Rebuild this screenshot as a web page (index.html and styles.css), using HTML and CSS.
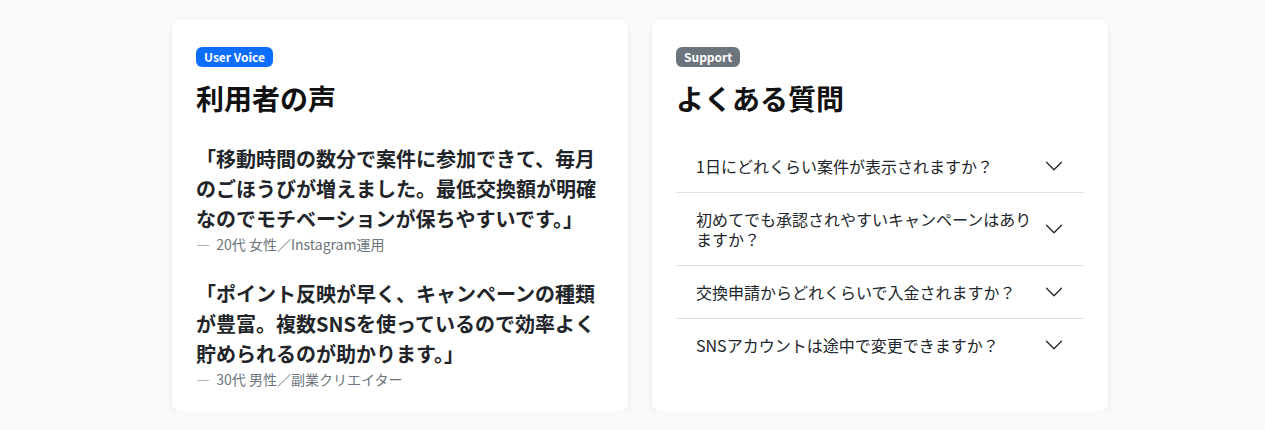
FILE: index.html
```html
<!DOCTYPE html>
<html lang="ja">
<head>
  <meta charset="utf-8">
  <title>利用者の声 / よくある質問</title>
  <link rel="stylesheet" href="styles.css">
</head>
<body>
  <section class="wrap">
    <div class="grid">

      <div class="card">
        <span class="badge badge-primary">User Voice</span>
        <h3 class="card-title">利用者の声</h3>

        <figure class="voice">
          <blockquote>「移動時間の数分で案件に参加できて、毎月のごほうびが増えました。最低交換額が明確なのでモチベーションが保ちやすいです。」</blockquote>
          <figcaption>—&nbsp; 20代 女性／Instagram運用</figcaption>
        </figure>

        <figure class="voice">
          <blockquote>「ポイント反映が早く、キャンペーンの種類が豊富。複数SNSを使っているので効率よく貯められるのが助かります。」</blockquote>
          <figcaption>—&nbsp; 30代 男性／副業クリエイター</figcaption>
        </figure>
      </div>

      <div class="card">
        <span class="badge badge-secondary">Support</span>
        <h3 class="card-title">よくある質問</h3>

        <div class="faq">
          <button type="button" class="faq-item">
            <span>1日にどれくらい案件が表示されますか？</span>
            <svg class="chev" viewBox="0 0 16 16"><path d="M2 5L8 11L14 5"/></svg>
          </button>
          <button type="button" class="faq-item">
            <span>初めてでも承認されやすいキャンペーンはありますか？</span>
            <svg class="chev" viewBox="0 0 16 16"><path d="M2 5L8 11L14 5"/></svg>
          </button>
          <button type="button" class="faq-item">
            <span>交換申請からどれくらいで入金されますか？</span>
            <svg class="chev" viewBox="0 0 16 16"><path d="M2 5L8 11L14 5"/></svg>
          </button>
          <button type="button" class="faq-item">
            <span>SNSアカウントは途中で変更できますか？</span>
            <svg class="chev" viewBox="0 0 16 16"><path d="M2 5L8 11L14 5"/></svg>
          </button>
        </div>
      </div>

    </div>
  </section>
</body>
</html>
```

FILE: styles.css
```css
body {
  margin: 0;
  background-color: #f8f9fa;
  color: #212529;
  font-family: "Noto Sans CJK JP", "Noto Sans", sans-serif;
  font-size: 16px;
  line-height: 1.5;
}

.wrap {
  width: 951px;
  margin: 0 auto;
  padding: 20px 0 0 15px;
  box-sizing: border-box;
}

.grid {
  display: grid;
  grid-template-columns: 1fr 1fr;
  gap: 24px;
}

.card {
  background: #fff;
  border-radius: 8px;
  box-shadow: 0 2px 4px rgba(0, 0, 0, 0.075);
  padding: 27px 24px 21px;
  display: flex;
  flex-direction: column;
  align-items: flex-start;
}

.badge {
  display: inline-block;
  font-size: 12px;
  font-weight: 700;
  line-height: 1;
  color: #fff;
  padding: 4px 8px;
  border-radius: 6px;
}

.badge-primary {
  background-color: #0d6efd;
}

.badge-secondary {
  background-color: #6c757d;
}

.card-title {
  font-size: 28px;
  font-weight: 700;
  line-height: 1.2;
  color: #111;
  margin: 15px 0 28px;
}

.voice {
  margin: 0 0 24px;
}

.voice:last-child {
  margin-bottom: 0;
}

.voice blockquote {
  margin: 0;
  font-size: 20px;
  font-weight: 700;
  line-height: 1.5;
  color: #212529;
}

.voice figcaption {
  font-size: 14px;
  color: #6c757d;
}

.faq {
  align-self: stretch;
  display: flex;
  flex-direction: column;
  margin-top: -4px;
}

.faq-item {
  display: flex;
  align-items: center;
  width: 100%;
  padding: 16px 20px;
  background: none;
  border: none;
  border-bottom: 1px solid #dee2e6;
  font: inherit;
  line-height: 1.25;
  color: #212529;
  text-align: left;
  cursor: pointer;
}

.faq-item:last-child {
  border-bottom: none;
}

.chev {
  flex-shrink: 0;
  width: 20px;
  height: 20px;
  margin-left: auto;
  fill: none;
  stroke: #212529;
  stroke-linecap: round;
  stroke-linejoin: round;
}
```
